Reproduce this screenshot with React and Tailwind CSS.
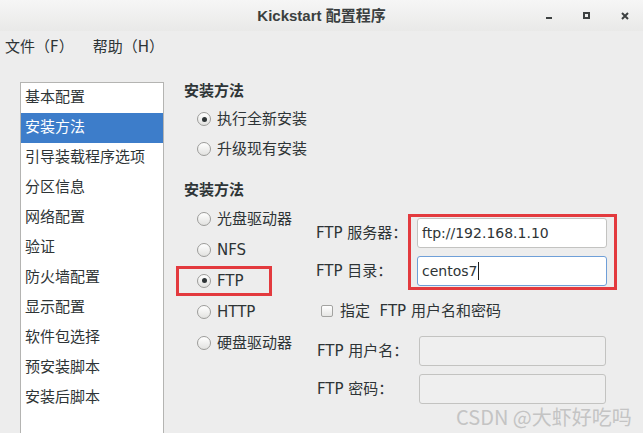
import React from "react";

const font = { fontFamily: '"DejaVu Sans", "Noto Sans CJK SC", sans-serif' };

function Radio({ checked }) {
  return (
    <span className="relative inline-flex w-[14px] h-[14px] rounded-full border border-[#9c9c9a] bg-gradient-to-b from-[#ffffff] to-[#e2e2e0] items-center justify-center shrink-0">
      {checked && <span className="w-[5px] h-[5px] rounded-full bg-[#2e3436]" />}
    </span>
  );
}

function RadioRow({ checked, label, h = "h-[30px]" }) {
  return (
    <div className={`flex items-center ${h} pl-[21px]`}>
      <Radio checked={checked} />
      <span className="ml-[6px] text-[15px] leading-[20px] text-[#2e3436]">{label}</span>
    </div>
  );
}

const items = [
  "基本配置",
  "安装方法",
  "引导装载程序选项",
  "分区信息",
  "网络配置",
  "验证",
  "防火墙配置",
  "显示配置",
  "软件包选择",
  "预安装脚本",
  "安装后脚本",
];

export default function App() {
  return (
    <div
      className="relative w-[643px] h-[433px] overflow-hidden bg-[#ededed] flex flex-col text-[#2e3436]"
      style={font}
    >
      {/* Title bar */}
      <div className="relative h-[31px] shrink-0 bg-gradient-to-b from-[#f6f6f6] to-[#e9e9e8] flex items-center justify-center">
        <span
          className="text-[15px] font-bold leading-[20px] text-[#3b3f40]"
          style={{ fontFamily: '"Liberation Sans", "Noto Sans CJK SC", sans-serif' }}
        >
          Kickstart 配置程序
        </span>
        <div className="absolute right-[14px] top-0 h-full flex items-center gap-[31px]">
          <span className="w-[6px] h-[7px] flex items-end">
            <span className="w-[6px] h-[2px] bg-[#3d4142]" />
          </span>
          <span className="w-[7px] h-[7px] border-2 border-[#3d4142]" />
          <svg width="8" height="8" viewBox="0 0 8 8">
            <path d="M1 1 L7 7 M7 1 L1 7" stroke="#3d4142" strokeWidth="2" />
          </svg>
        </div>
      </div>

      {/* Menu bar */}
      <div className="h-[31px] shrink-0 flex items-center pl-[5px] text-[15px] leading-[20px] gap-[19px]">
        <span>文件（F）</span>
        <span>帮助（H）</span>
      </div>

      {/* Content */}
      <div className="flex flex-1 pt-[20px] pl-[20px]">
        {/* List */}
        <div className="w-[144px] h-[400px] shrink-0 bg-white border border-[#b4b4b2]">
          {items.map((t, i) => (
            <div
              key={t}
              className={`h-[30px] flex items-center pl-[4px] pb-[2px] text-[15px] leading-[20px] ${
                i === 1 ? "bg-[#3d7dca] text-white" : "text-[#2e3436]"
              }`}
            >
              {t}
            </div>
          ))}
        </div>

        {/* Right panel */}
        <div className="ml-[12px] flex flex-col">
          <div className="mt-[-1px] h-[20px] pl-[8px] font-bold text-[15px] leading-[20px]">安装方法</div>
          <div className="mt-[3px]">
            <RadioRow checked label="执行全新安装" />
            <RadioRow label="升级现有安装" />
          </div>
          <div className="mt-[16px] h-[20px] pl-[8px] font-bold text-[15px] leading-[20px]">安装方法</div>

          <div className="mt-[3px] flex">
            {/* Left radio column */}
            <div className="w-[140px] flex flex-col">
              <RadioRow label="光盘驱动器" h="h-[31px]" />
              <RadioRow label="NFS" h="h-[31px]" />
              <div className="h-[31px] flex items-center">
                <div className="w-[96px] h-[30px] border-[3px] border-[#e33a3e] flex items-center pl-[18px]">
                  <Radio checked />
                  <span className="ml-[6px] text-[15px] leading-[20px]">FTP</span>
                </div>
              </div>
              <RadioRow label="HTTP" h="h-[31px]" />
              <RadioRow label="硬盘驱动器" h="h-[31px]" />
            </div>

            {/* Right form column */}
            <div className="flex flex-col">
              <div className="mt-[11px] flex">
                <div className="w-[92px] flex flex-col pt-[4px] gap-[8px] text-[15px]">
                  <div className="h-[30px] flex items-center">FTP 服务器：</div>
                  <div className="h-[30px] flex items-center">FTP 目录：</div>
                </div>
                <div className="w-[209px] h-[76px] border-[3px] border-[#e33a3e] pt-[1px] pl-[6px] flex flex-col gap-[8px]">
                  <div className="w-[190px] h-[30px] bg-white border border-[#c3c3c1] rounded-[3px] flex items-center pl-[4px] text-[14px] leading-[20px]">
                    ftp://192.168.1.10
                  </div>
                  <div className="w-[190px] h-[30px] bg-white border border-[#6f9fd8] rounded-[3px] flex items-center pl-[4px] text-[14px] leading-[20px]">
                    centos7
                    <span className="ml-[1px] w-[1px] h-[18px] bg-[#1e1e1e]" />
                  </div>
                </div>
              </div>

              <div className="mt-[6px] h-[30px] flex items-center pl-[5px]">
                <span className="w-[12px] h-[12px] rounded-[2px] border border-[#a3a3a1] bg-gradient-to-b from-white to-[#e6e6e4]" />
                <span className="ml-[7px] text-[15px] leading-[20px]">指定&nbsp; FTP 用户名和密码</span>
              </div>

              <div className="mt-[10px] flex items-center">
                <div className="w-[103px] pl-[1px] text-[15px] leading-[20px]">FTP 用户名：</div>
                <div className="w-[187px] h-[30px] bg-[#efefef] border border-[#c3c3c1] rounded-[3px]" />
              </div>
              <div className="mt-[8px] flex items-center">
                <div className="w-[103px] pl-[1px] text-[15px] leading-[20px]">FTP 密码：</div>
                <div className="w-[187px] h-[30px] bg-[#efefef] border border-[#c3c3c1] rounded-[3px]" />
              </div>
            </div>
          </div>
        </div>
      </div>

      {/* Watermark */}
      <div
        className="absolute left-[456px] top-[404px] text-[20px] leading-[26px] text-[#c4c4c4] whitespace-nowrap"
        style={{ fontFamily: '"Noto Sans CJK SC", sans-serif' }}
      >
        CSDN @大虾好吃吗
      </div>
    </div>
  );
}
